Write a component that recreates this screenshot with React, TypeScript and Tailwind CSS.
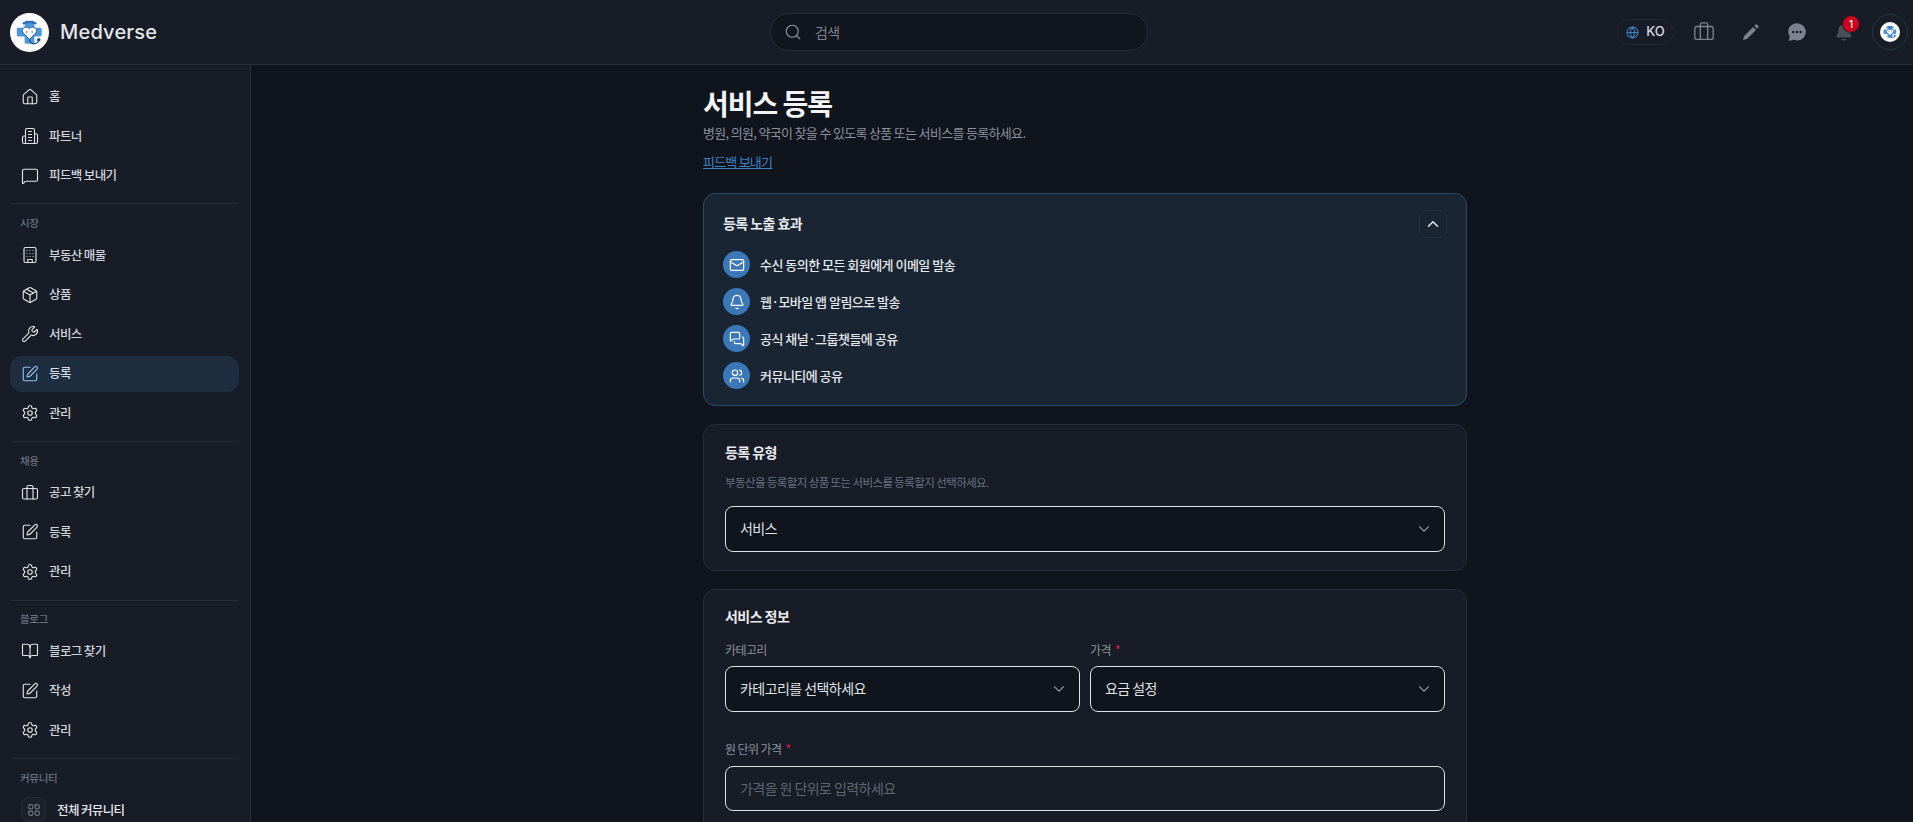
import {
  Bell,
  BookOpen,
  Briefcase,
  ChevronDown,
  ChevronUp,
  Globe,
  House,
  LayoutGrid,
  Mail,
  MessageSquare,
  MessagesSquare,
  Package,
  Search,
  Settings,
  SquarePen,
  Users,
  Wrench,
} from 'lucide-react'
import { IoChatbubbleEllipses, IoNotifications } from 'react-icons/io5'
import type { ReactNode } from 'react'

function Logo({ size }: { size: number }) {
  return (
    <svg width={size} height={size} viewBox="0 0 40 40" className="shrink-0">
      <circle cx="20" cy="20" r="20" fill="#fff" />
      <path d="M15 9.500q0-1.500 1.500-1.500h7q1.500 0 1.500 1.500V15h6q1.500 0 1.500 1.500v6q0 1.500-1.500 1.500h-6v6q0 1.500-1.500 1.500h-7q-1.500 0-1.500-1.500v-6H8.500Q7 24 7 22.500v-6Q7 15 8.500 15H15z" fill="#4a97dc" />
      <path d="M13 11q7-3.500 14 0" fill="none" stroke="#2b6cb0" strokeWidth="2" />
      <path d="M20 27l-6.500-6.500c-3.200-3.800 2.600-8.500 6.500-4.500 3.900-4 9.700.7 6.500 4.500z" fill="#fff" stroke="#1f4f8a" strokeWidth="1" />
      <circle cx="17.300" cy="19.500" r=".8" fill="#1f4f8a" />
      <circle cx="22.700" cy="19.500" r=".8" fill="#1f4f8a" />
      <path d="M20 27q.5 5 5 4.500t4-3.500" fill="none" stroke="#1f4f8a" strokeWidth="1.300" />
      <circle cx="29.500" cy="27.500" r="1.800" fill="#1f4f8a" />
    </svg>
  )
}

// older lucide building-2, the 0.562 one has different windows
function PartnerIcon() {
  return (
    <svg width="18" height="18" viewBox="0 0 24 24" fill="none" stroke="currentColor" strokeWidth="1.5" strokeLinecap="round" strokeLinejoin="round">
      <path d="M6 22V4a2 2 0 0 1 2-2h8a2 2 0 0 1 2 2v18Z" />
      <path d="M6 12H4a2 2 0 0 0-2 2v6a2 2 0 0 0 2 2h2" />
      <path d="M18 9h2a2 2 0 0 1 2 2v9a2 2 0 0 1-2 2h-2" />
      <path d="M10 6h4M10 10h4M10 14h4M10 18h4" />
    </svg>
  )
}

function ListingIcon() {
  return (
    <svg width="18" height="18" viewBox="0 0 24 24" fill="none" stroke="currentColor" strokeWidth="1.5" strokeLinecap="round" strokeLinejoin="round">
      <rect x="4" y="2" width="16" height="20" rx="2" />
      <path d="M9 22v-4h6v4M8 6h.01M16 6h.01M12 6h.01M12 10h.01M12 14h.01M16 10h.01M16 14h.01M8 10h.01M8 14h.01" />
    </svg>
  )
}

function PenIcon() {
  return (
    <svg width="21" height="21" viewBox="0 0 24 24" fill="#7d838e" className="ml-[25px]">
      <path d="M3.500 20.500l1.200-4.500L15 5.700l3.300 3.300L8 19.300z" />
      <path d="M16.300 4.400l1.300-1.300a1.500 1.500 0 0 1 2.100 0l1.200 1.200a1.500 1.500 0 0 1 0 2.100l-1.300 1.300z" />
    </svg>
  )
}

function NavItem({ icon, label, active }: { icon: ReactNode; label: string; active?: boolean }) {
  return (
    <div className={`flex h-9 items-center gap-[10px] rounded-xl px-[11px] text-[12.5px] font-medium tracking-[-0.05em] ${active ? 'bg-[#1e2d40] text-[#d7dde5]' : 'text-[#d1d5db]'}`}>
      <span className={active ? 'text-[#8ec1ee]' : 'text-[#e2e4e8]'}>{icon}</span>
      {label}
    </div>
  )
}

function NavGroup({ title, children, className }: { title: string; children: ReactNode; className?: string }) {
  return (
    <div className="flex flex-col border-t border-[#272c38] pt-[11.5px] pb-[9.75px]">
      <div className="flex h-[14px] items-center px-2.5 text-[10.5px] font-medium tracking-[-0.03em] text-[#6b7280]">{title}</div>
      <div className={`flex flex-col gap-[3.6px] ${className ?? 'mt-[7px]'}`}>{children}</div>
    </div>
  )
}

function Sidebar() {
  const ic = 'h-[18px] w-[18px]'
  return (
    <aside className="flex w-[251px] shrink-0 flex-col border-r border-[#272c38] bg-[#171c26] pt-[13.5px] pr-[11px] pl-2.5">
      <div className="flex flex-col gap-[3.6px] pb-[9.75px]">
        <NavItem icon={<House className={ic} strokeWidth={1.5} />} label="홈" />
        <NavItem icon={<PartnerIcon />} label="파트너" />
        <NavItem icon={<MessageSquare className={ic} strokeWidth={1.5} />} label="피드백 보내기" />
      </div>
      <NavGroup title="시장">
        <NavItem icon={<ListingIcon />} label="부동산 매물" />
        <NavItem icon={<Package className={ic} strokeWidth={1.5} />} label="상품" />
        <NavItem icon={<Wrench className={ic} strokeWidth={1.5} />} label="서비스" />
        <NavItem icon={<SquarePen className={ic} strokeWidth={1.5} />} label="등록" active />
        <NavItem icon={<Settings className={ic} strokeWidth={1.5} />} label="관리" />
      </NavGroup>
      <NavGroup title="채용">
        <NavItem icon={<Briefcase className={ic} strokeWidth={1.5} />} label="공고 찾기" />
        <NavItem icon={<SquarePen className={ic} strokeWidth={1.5} />} label="등록" />
        <NavItem icon={<Settings className={ic} strokeWidth={1.5} />} label="관리" />
      </NavGroup>
      <NavGroup title="블로그">
        <NavItem icon={<BookOpen className={ic} strokeWidth={1.5} />} label="블로그 찾기" />
        <NavItem icon={<SquarePen className={ic} strokeWidth={1.5} />} label="작성" />
        <NavItem icon={<Settings className={ic} strokeWidth={1.5} />} label="관리" />
      </NavGroup>
      <NavGroup title="커뮤니티" className="mt-[13px]">
        <div className="flex h-[25px] items-center gap-[11px] px-[11px] text-[12.5px] font-medium tracking-[-0.05em] text-[#e5e7eb]">
          <span className="flex h-[25px] w-[25px] items-center justify-center rounded-lg border border-[#272c38] bg-[#1b202b] text-[#8b919c]">
            <LayoutGrid className="h-[14px] w-[14px]" strokeWidth={1.5} />
          </span>
          전체 커뮤니티
        </div>
      </NavGroup>
    </aside>
  )
}

function Header() {
  return (
    <header className="flex h-[65px] shrink-0 items-center justify-between border-b border-[#272c38] bg-[#171c26] pr-[5px] pl-2.5">
      <div className="flex w-[760px] items-center gap-[11px]">
        <Logo size={39} />
        <span className="font-['Inter',sans-serif] text-[20px] font-medium tracking-[0.01em] text-[#e4e6ea]">Medverse</span>
      </div>
      <div className="flex h-[38px] w-[378px] items-center gap-[13px] rounded-full border border-[#272c38] bg-[#11151d] px-[13px]">
        <Search className="h-[18px] w-[18px] text-[#8b919c]" strokeWidth={1.5} />
        <span className="text-[14px] tracking-[-0.04em] text-[#7d838e]">검색</span>
      </div>
      <div className="flex w-[760px] items-center justify-end">
        <div className="flex h-[26px] w-[57px] items-center justify-center gap-[7px] rounded-full border border-[#222836] font-['Inter',sans-serif] text-[13px] font-medium text-[#d8dbe0]">
          <Globe className="h-[13px] w-[13px] text-[#3f80c4]" strokeWidth={2} />
          KO
        </div>
        <Briefcase className="ml-[19px] h-[22px] w-[22px] text-[#7d838e]" strokeWidth={1.5} />
        <PenIcon />
        <IoChatbubbleEllipses className="ml-[26px] h-[20px] w-[20px] text-[#7d838e]" />
        <div className="relative ml-[27px]">
          <IoNotifications className="h-[20px] w-[20px] text-[#4a4f5a]" />
          <span className="absolute -top-[7px] left-[8px] flex h-[18px] w-[18px] items-center justify-center rounded-full border border-[#171c26] bg-[#d0021b] font-['Inter',sans-serif] text-[10px] font-medium text-white">1</span>
        </div>
        <div className="ml-[18px] flex h-9 w-9 items-center justify-center rounded-full border border-[#2a3646]">
          <Logo size={20} />
        </div>
      </div>
    </header>
  )
}

function SelectBox({ label, className }: { label: string; className?: string }) {
  return (
    <div className={`flex h-[46px] items-center justify-between rounded-lg border border-[#dfe2e6] bg-[#10141c] pr-[11px] pl-[14px] text-[14px] tracking-[-0.04em] text-[#dfe2e6] ${className ?? ''}`}>
      <span className="pb-px">{label}</span>
      <ChevronDown className="h-[18px] w-[18px] text-[#8b919c]" strokeWidth={1.5} />
    </div>
  )
}

function Perk({ icon, label }: { icon: ReactNode; label: string }) {
  return (
    <div className="flex items-center gap-[10px] text-[13px] font-medium tracking-[-0.04em] text-[#e5e7eb]">
      <span className="flex h-[27px] w-[27px] items-center justify-center rounded-full bg-[#3b78b8] text-white">{icon}</span>
      {label}
    </div>
  )
}

export default function App() {
  const pi = 'h-4 w-4'
  const label = 'block text-[12px] leading-[18px] tracking-[-0.05em] text-[#8b919c]'
  return (
    <div className="flex h-screen flex-col overflow-hidden bg-[#10141c] font-['Noto_Sans_CJK_KR','Inter',sans-serif]">
      <Header />
      <div className="flex min-h-0 flex-1">
        <Sidebar />
        <main className="min-w-0 flex-1 pt-[20px] pl-[452px]">
          <div className="w-[764px]">
            <h1 className="text-[28px] leading-9 font-bold tracking-[-0.036em] text-[#f3f4f6]">서비스 등록</h1>
            <p className="mt-[2px] text-[13px] leading-5 tracking-[-0.052em] text-[#8b919c]">병원, 의원, 약국이 찾을 수 있도록 상품 또는 서비스를 등록하세요.</p>
            <a className="mt-[9px] block w-fit text-[13px] leading-5 tracking-[-0.06em] text-[#3f80c4] underline">피드백 보내기</a>

            <section className="mt-[21px] h-[213px] rounded-xl border border-[#2b4a6b] bg-[#1a2533] px-[19px] pt-[16px]">
              <div className="flex h-[28px] items-center justify-between">
                <h2 className="pb-[2px] text-[14px] font-semibold tracking-[-0.04em] text-[#e9ebee]">등록 노출 효과</h2>
                <span className="flex h-[28px] w-[28px] items-center justify-center rounded-lg border border-[#252f3f] text-[#e5e7eb]">
                  <ChevronUp className="h-[18px] w-[18px]" strokeWidth={2} />
                </span>
              </div>
              <div className="mt-[13px] flex flex-col gap-[10px]">
                <Perk icon={<Mail className={pi} strokeWidth={1.75} />} label="수신 동의한 모든 회원에게 이메일 발송" />
                <Perk icon={<Bell className={pi} strokeWidth={1.75} />} label="웹·모바일 앱 알림으로 발송" />
                <Perk icon={<MessagesSquare className={pi} strokeWidth={1.75} />} label="공식 채널·그룹챗들에 공유" />
                <Perk icon={<Users className={pi} strokeWidth={1.75} />} label="커뮤니티에 공유" />
              </div>
            </section>

            <section className="mt-[18px] h-[147px] rounded-xl border border-[#262c38] bg-[#171c26] px-[21px] pt-[17px]">
              <h2 className="text-[14px] leading-5 font-semibold tracking-[-0.04em] text-[#e9ebee]">등록 유형</h2>
              <p className="mt-[12px] text-[11.5px] leading-4 tracking-[-0.053em] text-[#6b7280]">부동산을 등록할지 상품 또는 서비스를 등록할지 선택하세요.</p>
              <SelectBox label="서비스" className="mt-[16px]" />
            </section>

            <section className="mt-[18px] rounded-xl border border-[#262c38] bg-[#171c26] px-[21px] pt-[16px] pb-6">
              <h2 className="text-[14px] leading-5 font-semibold tracking-[-0.04em] text-[#e9ebee]">서비스 정보</h2>
              <div className="mt-[15px] grid grid-cols-2 gap-[10px]">
                <div>
                  <label className={label}>카테고리</label>
                  <SelectBox label="카테고리를 선택하세요" className="mt-[7px]" />
                </div>
                <div>
                  <label className={label}>
                    가격 <span className="ml-[2px] text-[#e11d48]">*</span>
                  </label>
                  <SelectBox label="요금 설정" className="mt-[7px]" />
                </div>
              </div>
              <label className={`mt-[28px] ${label}`}>
                원 단위 가격 <span className="ml-[2px] text-[#e11d48]">*</span>
              </label>
              <div className="mt-[8px] flex h-[45px] items-center rounded-lg border border-[#dfe2e6] px-[14px] text-[14px] tracking-[-0.04em] text-[#5f6570]">
                가격을 원 단위로 입력하세요
              </div>
            </section>
          </div>
        </main>
      </div>
    </div>
  )
}
